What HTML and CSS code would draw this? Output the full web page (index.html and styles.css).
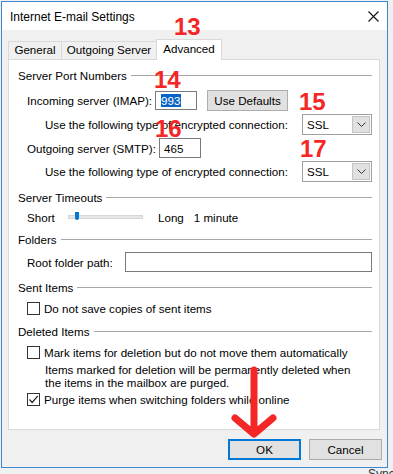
FILE: index.html
```html
<!DOCTYPE html>
<html lang="en">
<head>
  <meta charset="UTF-8">
  <title>Internet E-mail Settings</title>
  <link rel="stylesheet" href="styles.css">
</head>
<body>

  <div class="window">
    <div class="titlebar">
      <span class="title">Internet E-mail Settings</span>
      <svg class="close" width="11" height="11" viewBox="0 0 11 11">
        <path d="M0.5 0.5L10.5 10.5M10.5 0.5L0.5 10.5" stroke="#111" stroke-width="1.1" fill="none"/>
      </svg>
    </div>

    <div class="tabs">
      <div class="tab tab-general">General</div>
      <div class="tab tab-outgoing">Outgoing Server</div>
      <div class="tab tab-advanced active">Advanced</div>
    </div>

    <div class="panel">
      <div class="group">Server Port Numbers</div>

      <div class="row first">
        <span class="label label-in">Incoming server (IMAP):</span>
        <span class="input port"><span class="selected-text">993</span></span>
        <span class="button defaults">Use Defaults</span>
      </div>
      <div class="row sub mt4">
        <span>Use the following type of encrypted connection:</span>
        <span class="select">SSL<span class="drop"><svg width="9" height="5" viewBox="0 0 9 5"><path d="M0.5 0.5L4.5 4.5L8.5 0.5" stroke="#333" fill="none"/></svg></span></span>
      </div>
      <div class="row mt4">
        <span class="label label-out">Outgoing server (SMTP):</span>
        <span class="input port port-out">465</span>
      </div>
      <div class="row sub mt3">
        <span>Use the following type of encrypted connection:</span>
        <span class="select">SSL<span class="drop"><svg width="9" height="5" viewBox="0 0 9 5"><path d="M0.5 0.5L4.5 4.5L8.5 0.5" stroke="#333" fill="none"/></svg></span></span>
      </div>

      <div class="group mt6">Server Timeouts</div>
      <div class="row">
        <span class="label label-short">Short</span>
        <span class="track"><span class="thumb"></span></span>
        <span class="long">Long</span>
        <span class="minutes">1 minute</span>
      </div>

      <div class="group mt2">Folders</div>
      <div class="row mt3">
        <span class="label label-root">Root folder path:</span>
        <span class="input wide"></span>
      </div>

      <div class="group mt5">Sent Items</div>
      <div class="row mt1">
        <span class="check"></span>
        <span class="check-text">Do not save copies of sent items</span>
      </div>

      <div class="group mt3">Deleted Items</div>
      <div class="row mt1">
        <span class="check"></span>
        <span class="check-text">Mark items for deletion but do not move them automatically</span>
      </div>
      <div class="note">Items marked for deletion will be permanently deleted when<br>the items in the mailbox are purged.</div>
      <div class="row">
        <span class="check"><svg width="11" height="11" viewBox="0 0 11 11"><path d="M1.5 5.5L4.2 8.5L9.8 1.8" stroke="#222" stroke-width="1.2" fill="none"/></svg></span>
        <span class="check-text">Purge items when switching folders while online</span>
      </div>
    </div>

    <div class="actions">
      <span class="button ok">OK</span>
      <span class="button cancel">Cancel</span>
    </div>

    <!-- red annotations drawn over the dialog -->
    <span class="mark n13">13</span>
    <span class="mark n14">14</span>
    <span class="mark n15">15</span>
    <span class="mark n16">16</span>
    <span class="mark n17">17</span>
    <svg class="arrow" width="385" height="465" viewBox="0 0 385 465">
      <path d="M252 368V430M233 416L252 432L271 416" stroke="#f42626" stroke-width="7" stroke-linecap="round" stroke-linejoin="round" fill="none"/>
    </svg>
  </div>

  <div class="behind">Sync</div>

</body>
</html>
```

FILE: styles.css
```css
body {
  margin: 0;
  background-color: #eef0f2;
  font-family: "Liberation Sans", Arial, sans-serif;
  font-size: 11.6px;
  color: #000;
  overflow: hidden;
}

.window {
  position: relative;
  box-sizing: border-box;
  width: 387px;
  height: 467px;
  margin: 1px 0 0 1px;
  border: 1px solid #3f86cf;
  background-color: #f0f0f0;
}

.titlebar {
  display: flex;
  align-items: center;
  justify-content: space-between;
  height: 28px;
  padding: 0 8px 0 8px;
  background-color: #fff;
}

.title {
  font-size: 12px;
  margin-top: 2px;
}

.close {
  margin-top: 1px;
}

.tabs {
  display: flex;
  align-items: flex-end;
  height: 20px;
  margin-top: 9px;
  padding-left: 6px;
}

.tab {
  box-sizing: border-box;
  height: 18px;
  line-height: 16px;
  text-align: center;
  border: 1px solid #d9d9d9;
  border-bottom: none;
  background-color: #f0f0f0;
  margin-left: -1px;
}

.tab-general {
  width: 54px;
  margin-left: 0;
}

.tab-outgoing {
  width: 96px;
}

.tab-advanced {
  width: 66px;
}

.tab.active {
  position: relative;
  height: 21px;
  line-height: 18px;
  margin-bottom: -1px;
  background-color: #fff;
}

.panel {
  box-sizing: border-box;
  height: 371px;
  margin: 0 7px 0 6px;
  padding: 5px 7px 0 9px;
  border: 1px solid #d9d9d9;
  background-color: #fff;
}

.group {
  display: flex;
  align-items: center;
  height: 20px;
}

.group::after {
  content: "";
  flex: 1;
  margin-left: 4px;
  border-top: 1px solid #a8a8a8;
}

.row {
  display: flex;
  align-items: center;
  height: 20px;
  padding-left: 9px;
}

.row.first {
  margin-top: 5px;
}

.row.sub {
  padding-left: 27px;
}

.mt1 { margin-top: 1px; }
.mt2 { margin-top: 2px; }
.mt3 { margin-top: 3px; }
.mt4 { margin-top: 4px; }
.mt5 { margin-top: 5px; }
.mt6 { margin-top: 6px; }

.label-in { width: 128px; }
.label-out { width: 132px; }
.label-short { width: 41px; }
.label-root { width: 98px; }

.input {
  box-sizing: border-box;
  display: flex;
  align-items: center;
  height: 20px;
  border: 1px solid #7a7a7a;
  background-color: #fff;
  padding-left: 5px;
}

.port {
  width: 42px;
  height: 19px;
}

.port-out {
  height: 20px;
  padding-left: 4px;
}

.wide {
  flex: 1;
}

.selected-text {
  background-color: #0a64c8;
  color: #fff;
  line-height: 13px;
  padding: 0 1px 0 0;
}

.button {
  box-sizing: border-box;
  display: flex;
  align-items: center;
  justify-content: center;
  height: 21px;
  border: 1px solid #adadad;
  background-color: #e1e1e1;
}

.defaults {
  width: 81px;
  margin-left: 10px;
}

.select {
  box-sizing: border-box;
  display: flex;
  align-items: center;
  justify-content: space-between;
  width: 70px;
  height: 21px;
  margin-left: auto;
  padding: 0 1px 0 4px;
  border: 1px solid #a0a0a0;
  background-color: #fff;
}

.drop {
  box-sizing: border-box;
  display: flex;
  align-items: center;
  justify-content: center;
  width: 18px;
  height: 17px;
  border: 1px solid #c4c4c4;
  background-color: #e1e1e1;
}

.track {
  position: relative;
  box-sizing: border-box;
  width: 75px;
  height: 4px;
  border: 1px solid #d6d6d6;
  background-color: #e7e7e7;
}

.thumb {
  position: absolute;
  left: 6px;
  top: -4px;
  width: 4px;
  height: 8px;
  border-radius: 0 0 2px 2px;
  background-color: #0078d7;
}

.long {
  margin-left: 15px;
}

.minutes {
  margin-left: 10px;
}

.check {
  box-sizing: border-box;
  display: flex;
  align-items: center;
  justify-content: center;
  width: 13px;
  height: 13px;
  border: 1px solid #333;
  background-color: #fff;
}

.check-text {
  margin-left: 4px;
}

.note {
  margin-top: 1px;
  padding-left: 27px;
  line-height: 13px;
}

.actions {
  display: flex;
  justify-content: flex-end;
  gap: 8px;
  margin-top: 9px;
  padding-right: 5px;
}

.ok,
.cancel {
  width: 73px;
}

.ok {
  border: 2px solid #0078d7;
}

.mark {
  position: absolute;
  font-family: "Liberation Sans", Arial, sans-serif;
  font-weight: bold;
  font-size: 24px;
  line-height: 1;
  color: #f42626;
}

.n13 { left: 172px; top: 13px; }
.n14 { left: 152px; top: 66px; }
.n15 { left: 297px; top: 88px; }
.n16 { left: 153px; top: 115px; }
.n17 { left: 298px; top: 135px; }

.arrow {
  position: absolute;
  left: 0;
  top: 0;
  pointer-events: none;
}

.behind {
  padding-left: 368px;
  font-size: 12px;
  line-height: 12px;
  margin-top: 0;
  color: #333;
}
```
